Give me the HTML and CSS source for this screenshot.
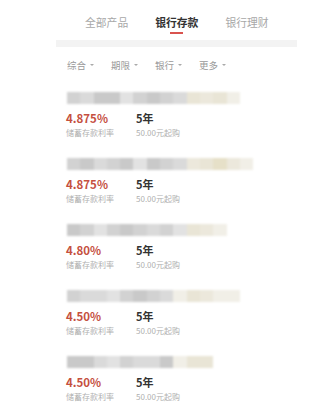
FILE: index.html
```html
<!DOCTYPE html>
<html>
<head>
<meta name="viewport" content="width=device-width, initial-scale=1">
<title>银行存款</title>
<link rel="stylesheet" href="styles.css">
</head>
<body>

<div class="tabs">
  <div class="tab">全部产品</div>
  <div class="tab active">银行存款</div>
  <div class="tab">银行理财</div>
</div>
<div class="strip"></div>

<div class="filters">
  <span class="filter">综合<i class="caret"></i></span>
  <span class="filter">期限<i class="caret"></i></span>
  <span class="filter">银行<i class="caret"></i></span>
  <span class="filter">更多<i class="caret"></i></span>
</div>

<div class="list">
  <div class="card">
    <div class="bar">
      <span class="c2"></span><span class="c3"></span><span class="c1"></span><span class="c1"></span><span class="c4"></span><span class="c2"></span><span class="c1"></span><span class="c2"></span><span class="c3"></span><span class="b1"></span><span class="b2"></span><span class="b1"></span><span class="b3"></span>
    </div>
    <div class="row">
      <div class="col"><span class="rate">4.875%</span><span class="label">储蓄存款利率</span></div>
      <div class="col"><span class="term">5年</span><span class="label">50.00元起购</span></div>
    </div>
  </div>

  <div class="card">
    <div class="bar">
      <span class="c2"></span><span class="c1"></span><span class="c3"></span><span class="c2"></span><span class="c1"></span><span class="c4"></span><span class="c1"></span><span class="c2"></span><span class="c3"></span><span class="b2"></span><span class="b1"></span><span class="b4"></span><span class="b2"></span><span class="b3"></span>
    </div>
    <div class="row">
      <div class="col"><span class="rate">4.875%</span><span class="label">储蓄存款利率</span></div>
      <div class="col"><span class="term">5年</span><span class="label">50.00元起购</span></div>
    </div>
  </div>

  <div class="card">
    <div class="bar">
      <span class="c1"></span><span class="c2"></span><span class="c4"></span><span class="c2"></span><span class="c1"></span><span class="c2"></span><span class="c3"></span><span class="c2"></span><span class="c4"></span><span class="b1"></span><span class="b2"></span><span class="b3"></span>
    </div>
    <div class="row">
      <div class="col"><span class="rate">4.80%</span><span class="label">储蓄存款利率</span></div>
      <div class="col"><span class="term">5年</span><span class="label">50.00元起购</span></div>
    </div>
  </div>

  <div class="card">
    <div class="bar">
      <span class="c2"></span><span class="c3"></span><span class="c3"></span><span class="c4"></span><span class="c2"></span><span class="c1"></span><span class="c2"></span><span class="c3"></span><span class="b3"></span><span class="b1"></span><span class="b2"></span><span class="b3"></span><span class="b3"></span>
    </div>
    <div class="row">
      <div class="col"><span class="rate">4.50%</span><span class="label">储蓄存款利率</span></div>
      <div class="col"><span class="term">5年</span><span class="label">50.00元起购</span></div>
    </div>
  </div>

  <div class="card">
    <div class="bar">
      <span class="c1"></span><span class="c1"></span><span class="c3"></span><span class="c4"></span><span class="c2"></span><span class="c3"></span><span class="c3"></span><span class="c1"></span><span class="b3"></span><span class="b1"></span><span class="b1"></span>
    </div>
    <div class="row">
      <div class="col"><span class="rate">4.50%</span><span class="label">储蓄存款利率</span></div>
      <div class="col"><span class="term">5年</span><span class="label">50.00元起购</span></div>
    </div>
  </div>
</div>

</body>
</html>
```

FILE: styles.css
```css
* {box-sizing: border-box;}
body {
  margin: 0;
  background: #fff;
  font-family: "Noto Sans CJK SC", "Noto Sans", sans-serif;
  color: #333;
}

/* top tabs */
.tabs {
  height: 40px;
  display: flex;
  gap: 27px;
  padding: 14px 0 0 85px;
}
.tab {
  display: flex;
  flex-direction: column;
  align-items: center;
  font-size: 10.8px;
  line-height: 16px;
  color: #a8a8a8;
}
.tab.active {
  color: #333;
  font-weight: bold;
}
.tab.active::after {
  content: "";
  width: 13px;
  height: 2px;
  margin-top: 2px;
  background: #d9534f;
}

.strip {
  margin-left: 56px;
  width: 241px;
  height: 7px;
  background: #f3f3f3;
}

/* filter row */
.filters {
  height: 36px;
  display: flex;
  align-items: center;
  gap: 17px;
  padding-left: 67px;
}
.filter {
  display: flex;
  align-items: center;
  font-size: 9.5px;
  color: #9a9a9a;
}
.caret {
  margin-left: 4px;
  border-left: 2px solid transparent;
  border-right: 2px solid transparent;
  border-top: 2.5px solid #aaa;
}

/* product list */
.card {
  height: 66px;
  padding: 9px 0 0 66px;
}
.bar {
  display: flex;
  height: 12px;
  margin-left: 1px;
  filter: blur(0.8px);
}
.bar span {
  width: 13.3px;
  height: 100%;
}
.c1 {background: #c9c9c9;}
.c2 {background: #d2d2d2;}
.c3 {background: #dadada;}
.c4 {background: #e2e2e2;}
.b1 {background: #e9e5d6;}
.b2 {background: #ece8dc;}
.b3 {background: #f1efe7;}
.b4 {background: #e6e0c8;}

.row {
  display: flex;
  margin-top: 6px;
}
.col {
  display: flex;
  flex-direction: column;
  width: 70px;
}
.rate {
  font-size: 11.5px;
  line-height: 16px;
  font-weight: bold;
  color: #c5503f;
}
.term {
  font-size: 11px;
  line-height: 16px;
  font-weight: bold;
  color: #333;
}
.label {
  margin-top: 1px;
  font-size: 8px;
  line-height: 12px;
  color: #b0b0b0;
}
```
